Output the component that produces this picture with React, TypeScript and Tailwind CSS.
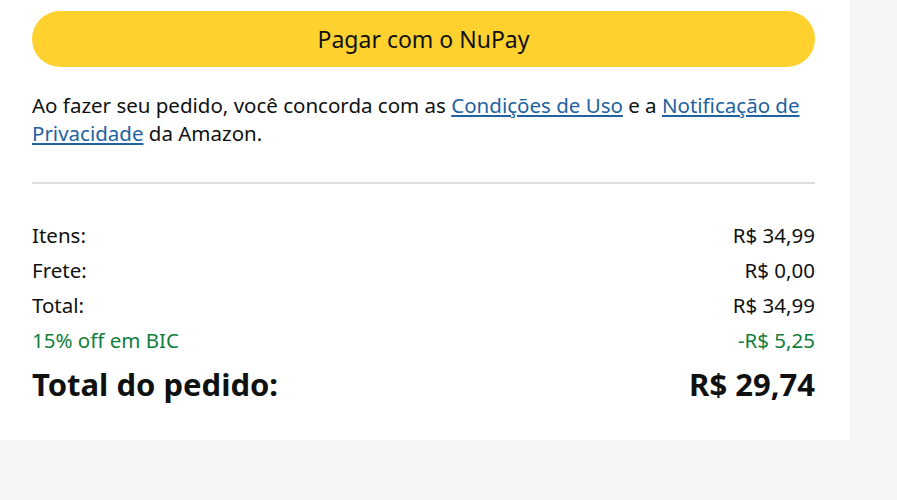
import React from "react";

const rows = [
  { label: "Itens:", value: "R$ 34,99" },
  { label: "Frete:", value: "R$ 0,00" },
  { label: "Total:", value: "R$ 34,99" },
];

export default function App() {
  return (
    <div className="min-h-[500px] w-full bg-[#f5f5f5] font-['Noto_Sans',sans-serif] text-[#0f1111]">
      <div className="w-[850px] bg-white pt-[11px] pb-[36px] pl-8 pr-[35px]">
        {/* Pay button */}
        <button className="flex h-[56px] w-full items-center justify-center rounded-full bg-[#ffd12f] text-[23px] text-[#0f1111]">
          Pagar com o NuPay
        </button>

        <p className="mt-[24px] text-[20.5px] leading-[28px]">
          Ao fazer seu pedido, você concorda com as{" "}
          <a className="text-[#2162a1] underline underline-offset-2">Condições de Uso</a> e a{" "}
          <a className="text-[#2162a1] underline underline-offset-2">Notificação de Privacidade</a> da
          Amazon.
        </p>

        <hr className="mt-[35px] border-t-2 border-[#dadddd]" />

        {/* Order summary */}
        <div className="mt-[34px] flex flex-col text-[20.5px]">
          {rows.map((r) => (
            <div key={r.label} className="flex h-[35px] items-center justify-between">
              <span>{r.label}</span>
              <span>{r.value}</span>
            </div>
          ))}
          <div className="flex h-[35px] items-center justify-between text-[#127e3d]">
            <span>15% off em BIC</span>
            <span>-R$ 5,25</span>
          </div>
          <div className="mt-[6px] flex items-center justify-between text-[31px] font-bold leading-[40px]">
            <span>Total do pedido:</span>
            <span>R$ 29,74</span>
          </div>
        </div>
      </div>
    </div>
  );
}
